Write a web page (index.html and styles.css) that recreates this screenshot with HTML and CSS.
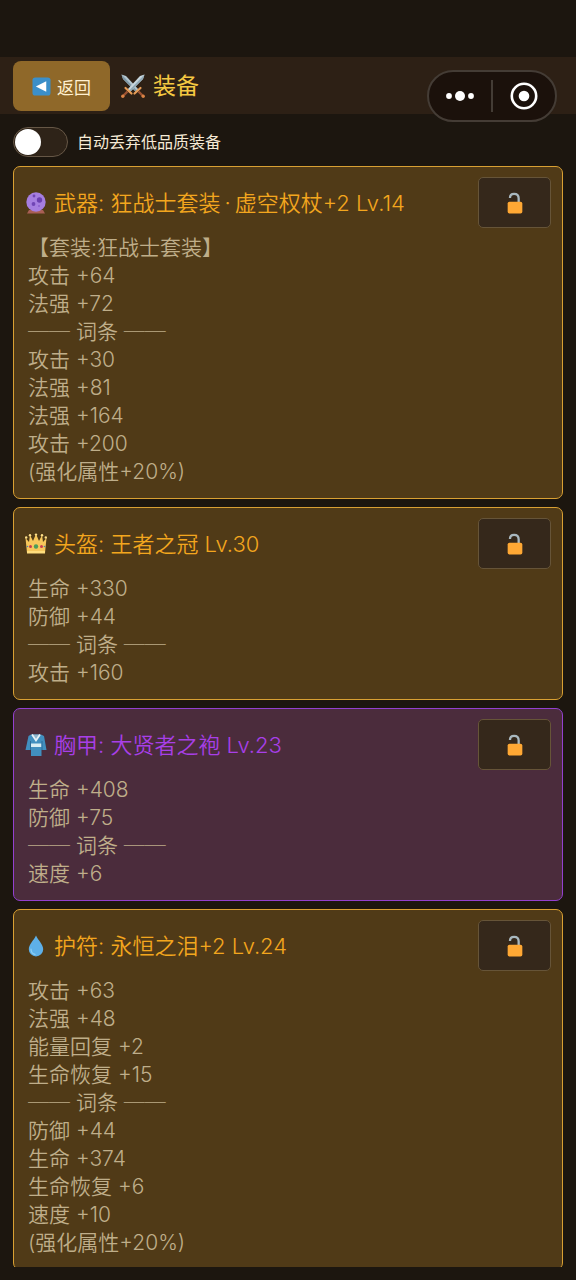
FILE: index.html
```html
<!DOCTYPE html>
<html lang="zh-CN">
<head>
<meta charset="utf-8">
<meta name="viewport" content="width=device-width, initial-scale=1">
<title>装备</title>
<link rel="stylesheet" href="styles.css">
</head>
<body>
<svg class="defs" aria-hidden="true">
  <symbol id="unlock" viewBox="0 0 24 24">
    <path d="M6.500 6.500C6.500 3.500 8.500 2 11 2C14 2 16 4 16 7V12" fill="none" stroke="#a9b8bf" stroke-width="2.500"/>
    <rect x="4" y="10.500" width="16" height="13" rx="2" fill="#ffa834"/>
  </symbol>
</svg>
<div class="app">
  <header class="topbar">
    <button class="back" type="button">
      <svg class="back-icon" viewBox="0 0 20 20" aria-hidden="true"><rect x="0.500" y="0.500" width="19" height="19" rx="3" fill="#3b8fc9"/><path d="M15 4.500V15.500L4 10Z" fill="#fff"/></svg>
      <span>返回</span>
    </button>
    <h1 class="page-title">
      <svg class="title-icon" viewBox="0 0 26 26" aria-hidden="true">
        <g>
          <path d="M1.500 1.500L6 3L19 17L16.500 19.500L3 6Z" fill="#b3c5ce"/>
          <path d="M1.500 1.500L17.700 18.200L16.500 19.500L3 6Z" fill="#7f98a6"/>
          <path d="M14.500 20.500L20.500 15" stroke="#e59b55" stroke-width="2.200" stroke-linecap="round"/>
          <path d="M18.500 18.500L22.500 22.500" stroke="#9b5332" stroke-width="2.400"/>
          <circle cx="23.200" cy="23.200" r="1.700" fill="#d98245"/>
        </g>
        <g transform="matrix(-1 0 0 1 26 0)">
          <path d="M1.500 1.500L6 3L19 17L16.500 19.500L3 6Z" fill="#c8d7de"/>
          <path d="M1.500 1.500L17.700 18.200L16.500 19.500L3 6Z" fill="#91a9b6"/>
          <path d="M14.500 20.500L20.500 15" stroke="#e59b55" stroke-width="2.200" stroke-linecap="round"/>
          <path d="M18.500 18.500L22.500 22.500" stroke="#9b5332" stroke-width="2.400"/>
          <circle cx="23.200" cy="23.200" r="1.700" fill="#d98245"/>
        </g>
      </svg>
      <span>装备</span>
    </h1>
    <div class="capsule">
      <button class="capsule-button" type="button" aria-label="更多">
        <svg class="dots" viewBox="0 0 28 12" aria-hidden="true"><g fill="#fff"><circle cx="3" cy="6" r="2.900"/><circle cx="14" cy="6" r="5"/><circle cx="25" cy="6" r="2.900"/></g></svg>
      </button>
      <span class="capsule-line"></span>
      <button class="capsule-button" type="button" aria-label="关闭">
        <svg class="ring" viewBox="0 0 28 28" aria-hidden="true"><circle cx="14" cy="14" r="12.200" fill="none" stroke="#fff" stroke-width="2.600"/><circle cx="14" cy="14" r="5.300" fill="#fff"/></svg>
      </button>
    </div>
  </header>

  <label class="option">
    <input class="switch" type="checkbox" role="switch">
    <span>自动丢弃低品质装备</span>
  </label>

  <main class="list">
    <article class="card gold">
      <div class="card-head">
        <svg class="item-icon" viewBox="0 0 22 22" aria-hidden="true">
          <path d="M4 18H18L20 21.500H2Z" fill="#a95f55"/>
          <circle cx="11" cy="10" r="9.700" fill="#a67ee0"/>
          <circle cx="14.500" cy="8" r="2.700" fill="#6b3fb0"/><circle cx="8.500" cy="12" r="1.900" fill="#7045b5"/><circle cx="9" cy="4" r="1.400" fill="#7045b5"/><circle cx="14" cy="14" r="1" fill="#8a5fce"/>
        </svg>
        <h2 class="name">武器: 狂战士套装<span class="separator">·</span>虚空权杖+2 Lv.14</h2>
        <button class="lock" type="button" aria-label="锁定"><svg class="lock-icon" aria-hidden="true"><use href="#unlock"/></svg></button>
      </div>
      <div class="stats">
        <p>【套装:狂战士套装】</p>
        <p>攻击 +64</p>
        <p>法强 +72</p>
        <p>── 词条 ──</p>
        <p>攻击 +30</p>
        <p>法强 +81</p>
        <p>法强 +164</p>
        <p>攻击 +200</p>
        <p>(强化属性+20%)</p>
      </div>
    </article>

    <article class="card gold">
      <div class="card-head">
        <svg class="item-icon" viewBox="0 0 22 22" aria-hidden="true">
          <path d="M2 20L0.500 5L4 9L5 2L8 8L11 1L14 8L17 2L18 9L21.500 5L20 20Z" fill="#f7c75b"/>
          <g fill="#ffe08a"><circle cx="1.200" cy="4.500" r="1.200"/><circle cx="5" cy="2.200" r="1.200"/><circle cx="11" cy="1.600" r="1.200"/><circle cx="17" cy="2.200" r="1.200"/><circle cx="20.800" cy="4.500" r="1.200"/></g>
          <path d="M2 18H20V20.500H2Z" fill="#ffdd7d"/>
          <circle cx="11" cy="13.500" r="2.200" fill="#4a9d5b"/><circle cx="5.500" cy="13.500" r="1.500" fill="#c83d50"/><circle cx="16.500" cy="13.500" r="1.500" fill="#c83d50"/><circle cx="2.500" cy="13.500" r="0.800" fill="#4c85b5"/><circle cx="19.500" cy="13.500" r="0.800" fill="#4c85b5"/>
        </svg>
        <h2 class="name">头盔: 王者之冠 Lv.30</h2>
        <button class="lock" type="button" aria-label="锁定"><svg class="lock-icon" aria-hidden="true"><use href="#unlock"/></svg></button>
      </div>
      <div class="stats">
        <p>生命 +330</p>
        <p>防御 +44</p>
        <p>── 词条 ──</p>
        <p>攻击 +160</p>
      </div>
    </article>

    <article class="card purple">
      <div class="card-head">
        <svg class="item-icon" viewBox="0 0 22 22" aria-hidden="true">
          <path d="M6 0.500H16L19 2L21.500 16H16.500V22H6V16H0.500L3.500 2Z" fill="#418fbf"/>
          <path d="M7 0.500H15L11 6.500Z" fill="#8fb5cc"/>
          <path d="M7 0.500L11 6.500L15 0.500" fill="none" stroke="#e6f2f7" stroke-width="1.800"/>
          <path d="M6 9.500H16.500V13H6Z" fill="#d8edf4"/>
          <path d="M5.500 7V16M17 7V16" stroke="#2c6c9a" stroke-width="1"/>
        </svg>
        <h2 class="name">胸甲: 大贤者之袍 Lv.23</h2>
        <button class="lock" type="button" aria-label="锁定"><svg class="lock-icon" aria-hidden="true"><use href="#unlock"/></svg></button>
      </div>
      <div class="stats">
        <p>生命 +408</p>
        <p>防御 +75</p>
        <p>── 词条 ──</p>
        <p>速度 +6</p>
      </div>
    </article>

    <article class="card gold">
      <div class="card-head">
        <svg class="item-icon" viewBox="0 0 22 22" aria-hidden="true">
          <path d="M11 0.500C13 5 18.200 9.500 18.200 14.200A7.200 7.200 0 0 1 3.800 14.200C3.800 9.500 9 5 11 0.500Z" fill="#5eb0e8"/>
          <path d="M6 14C6 17 8 19 10 19.300" fill="none" stroke="#8fd0f5" stroke-width="1.200" stroke-linecap="round"/>
        </svg>
        <h2 class="name">护符: 永恒之泪+2 Lv.24</h2>
        <button class="lock" type="button" aria-label="锁定"><svg class="lock-icon" aria-hidden="true"><use href="#unlock"/></svg></button>
      </div>
      <div class="stats">
        <p>攻击 +63</p>
        <p>法强 +48</p>
        <p>能量回复 +2</p>
        <p>生命恢复 +15</p>
        <p>── 词条 ──</p>
        <p>防御 +44</p>
        <p>生命 +374</p>
        <p>生命恢复 +6</p>
        <p>速度 +10</p>
        <p>(强化属性+20%)</p>
      </div>
    </article>
  </main>
</div>
</body>
</html>
```
FILE: styles.css
```css
* {
  box-sizing: border-box;
}

body {
  margin: 0;
  background: #1c160f;
  font-family: Inter, "Noto Sans CJK SC", sans-serif;
}

h1,
h2,
p {
  margin: 0;
  font-weight: 400;
}

button {
  padding: 0;
  border: 0;
  background: none;
  color: inherit;
  font: inherit;
}

svg {
  display: block;
  flex: none;
}

.defs {
  position: absolute;
  width: 0;
  height: 0;
}

.app {
  display: flex;
  flex-direction: column;
  height: 100vh;
  padding: 57px 0 13px;
}

.topbar {
  position: relative;
  display: flex;
  align-items: center;
  gap: 10px;
  padding: 4px 13px 3px;
  background: #2d2015;
}

.back {
  display: flex;
  align-items: center;
  gap: 6px;
  height: 50px;
  padding: 0 19px;
  border-radius: 8px;
  background: #8f6829;
  color: #fff0d0;
  font-size: 17px;
}

.back-icon {
  width: 19px;
  height: 19px;
}

.page-title {
  display: flex;
  align-items: center;
  gap: 7px;
  color: #f5c842;
  font-size: 23px;
  line-height: 28px;
}

.title-icon {
  width: 26px;
  height: 26px;
}

.capsule {
  position: absolute;
  top: 13px;
  right: 19px;
  display: flex;
  align-items: center;
  width: 130px;
  height: 52px;
  border: 2px solid #443c35;
  border-radius: 26px;
  background: #1b110b;
}

.capsule-button {
  display: flex;
  flex: 1;
  align-items: center;
  justify-content: center;
  height: 100%;
}

.capsule-line {
  width: 2px;
  height: 32px;
  background: #443c35;
}

.dots {
  width: 28px;
  height: 12px;
}

.ring {
  width: 28px;
  height: 28px;
}

.option {
  display: flex;
  align-items: center;
  gap: 9px;
  padding: 13px 13px 9px;
  color: #f5ead6;
  font-size: 16px;
  line-height: 24px;
}

.switch {
  display: flex;
  align-items: center;
  width: 55px;
  height: 30px;
  margin: 0;
  padding: 0 1px;
  border: 1px solid #665746;
  border-radius: 15px;
  background: #2e2318;
  appearance: none;
}

.switch::before {
  width: 26px;
  height: 26px;
  border-radius: 50%;
  background: #fff;
  content: "";
}

.switch:checked {
  justify-content: flex-end;
  background: #8f6829;
}

.list {
  display: flex;
  flex: 1;
  flex-direction: column;
  gap: 8px;
  min-height: 0;
  padding: 0 13px;
  overflow: hidden;
}

.card {
  flex: none;
  padding: 10px 11px 12px;
  border: 1px solid;
  border-radius: 7px;
}

.gold {
  border-color: #d9a033;
  background: #503a17;
}

.purple {
  border-color: #9340cf;
  background: #4b2c3c;
}

.card-head {
  display: flex;
  align-items: center;
  gap: 7px;
}

.item-icon {
  width: 22px;
  height: 22px;
}

.name {
  flex: 1;
  font-size: 22px;
  font-weight: 350;
  line-height: 30px;
}

.separator {
  padding: 0 4px;
}

.gold .name {
  color: #f3a61e;
}

.purple .name {
  color: #a83fe8;
}

.lock {
  display: flex;
  align-items: center;
  justify-content: center;
  width: 73px;
  height: 51px;
  border: 1px solid #665438;
  border-radius: 5px;
  background: #35281b;
}

.lock-icon {
  width: 22px;
  height: 22px;
}

.stats {
  padding: 6px 3px 0;
  color: #bfae8a;
  font-size: 21px;
  line-height: 28px;
}

.stats p {
  font-weight: 350;
}
```
